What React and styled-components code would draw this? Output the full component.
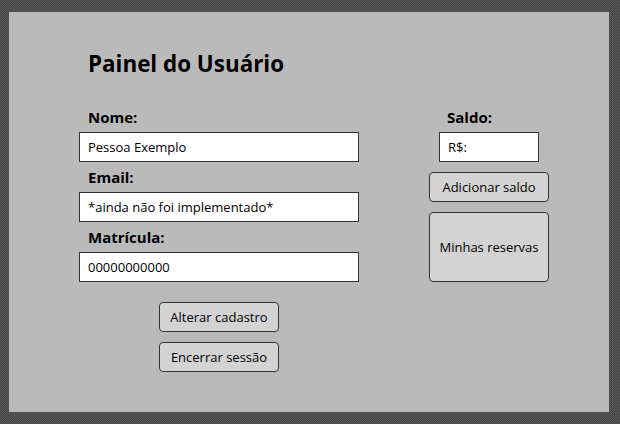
import React from "react";
import styled, { createGlobalStyle } from "styled-components";

const GlobalStyle = createGlobalStyle`
    html, body {
        margin: 0;
        padding: 0;
    }
    body {
        width: 620px;
        height: 424px;
        overflow: hidden;
        font-family: "Open Sans", "Noto Sans", sans-serif;
        background: repeating-conic-gradient(#474747 0 25%, #585858 0 50%) 0 0 / 2px 2px;
    }
`;

const Window = styled.div`
    padding: 12px 11px 12px 9px;
`;

const Panel = styled.div`
    box-sizing: border-box;
    width: 600px;
    height: 400px;
    background: #bababa;
    padding: 37px 0 0 70px;
    display: grid;
    grid-template-columns: 280px 120px;
    grid-template-rows: 30px auto;
    column-gap: 70px;
    row-gap: 23px;
    align-content: start;
`;

const Title = styled.h1`
    grid-column: 1 / -1;
    margin: 0 0 0 9px;
    font-size: 22.4px;
    line-height: 30px;
    font-weight: 700;
    color: #000;
`;

const Column = styled.div`
    display: flex;
    flex-direction: column;
    align-items: ${(p) => (p.$center ? "center" : "stretch")};
`;

const Label = styled.label`
    display: block;
    height: 30px;
    line-height: 30px;
    font-size: 15px;
    font-weight: 700;
    color: #000;
    padding-left: ${(p) => p.$indent || 9}px;
    align-self: stretch;
`;

const Field = styled.input`
    box-sizing: border-box;
    width: ${(p) => p.$width || 280}px;
    height: 30px;
    margin: 0;
    border: 1px solid #333;
    border-radius: 0;
    background: #fff;
    padding: 0 8px;
    font-family: "Open Sans", "Noto Sans", sans-serif;
    font-size: 13px;
    color: #000;
    outline: none;
`;

const ButtonStack = styled.div`
    display: flex;
    flex-direction: column;
    align-items: center;
    gap: 10px;
    margin-top: ${(p) => p.$top || 0}px;
`;

const Button = styled.button`
    box-sizing: border-box;
    width: 120px;
    height: ${(p) => p.$tall ? 70 : 30}px;
    margin: 0;
    padding: 0;
    border: 1px solid #333;
    border-radius: 4px;
    background: #d3d3d3;
    font-family: "Open Sans", "Noto Sans", sans-serif;
    font-size: 13px;
    color: #000;
    cursor: pointer;
`;

export default function App() {
    return (
        <>
            <GlobalStyle />
            <Window>
                <Panel>
                    <Title>Painel do Usuário</Title>
                    <Column>
                        <Label>Nome:</Label>
                        <Field defaultValue="Pessoa Exemplo" />
                        <Label>Email:</Label>
                        <Field defaultValue="*ainda não foi implementado*" />
                        <Label>Matrícula:</Label>
                        <Field defaultValue="00000000000" />
                        <ButtonStack $top={20}>
                            <Button>Alterar cadastro</Button>
                            <Button>Encerrar sessão</Button>
                        </ButtonStack>
                    </Column>
                    <Column $center>
                        <Label $indent={18}>Saldo:</Label>
                        <Field $width={100} defaultValue="R$:" />
                        <ButtonStack $top={10}>
                            <Button>Adicionar saldo</Button>
                            <Button $tall>Minhas reservas</Button>
                        </ButtonStack>
                    </Column>
                </Panel>
            </Window>
        </>
    );
}
